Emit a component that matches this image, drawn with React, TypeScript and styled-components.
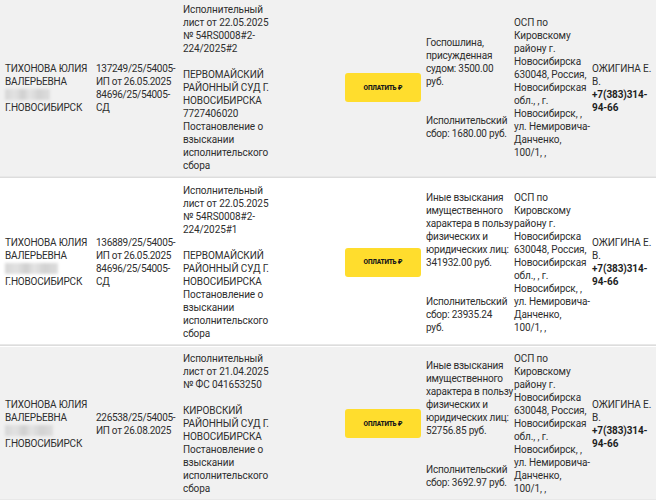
import React from "react";
import styled, { createGlobalStyle } from "styled-components";

const Global = createGlobalStyle`
  html, body { margin: 0; padding: 0; background: #ffffff; }
  body { font-family: Roboto, "Liberation Sans", sans-serif; overflow: hidden; }
`;

const Table = styled.div`
  margin-top: -2px;
  width: 656px;
  color: #2e2e2e;
  font-size: 10px;
  line-height: 13px;
`;

const Row = styled.div<{ $shade: boolean }>`
  display: grid;
  grid-template-columns: 91px 87px 92px 151px 88px 78px 69px;
  align-items: center;
  padding: 5px 0;
  background: ${(p) => (p.$shade ? "#f1f1f1" : "#ffffff")};
  border-bottom: 1px solid #dddddd;
  box-shadow: inset 0 -1px 0 #e8e8e8;
  margin-bottom: 1px;
`;

const Cell = styled.div<{ $spacing?: number }>`
  padding-left: 5px;
  white-space: nowrap;
  letter-spacing: ${(p) => p.$spacing ?? -0.1}px;
`;

const Block = styled.div<{ $gap?: number }>`
  margin-top: ${(p) => p.$gap ?? 0}px;
`;

const Line = styled.div<{ $bold?: boolean }>`
  font-weight: ${(p) => (p.$bold ? 700 : 400)};
  color: ${(p) => (p.$bold ? "#1e1e1e" : "inherit")};
`;

const Masked = styled.div<{ $w: number }>`
  height: 13px;
  display: flex;
  align-items: center;
  &::before {
    content: "";
    display: block;
    width: ${(p) => p.$w}px;
    height: 11px;
    background: linear-gradient(90deg, #d6d6d6 0%, #e2e2e2 22%, #cfcfcf 40%, #e4e4e4 55%, #d2d2d2 75%, #dddddd 100%);
    filter: blur(1.5px);
  }
`;

const PayCell = styled.div`
  display: flex;
  justify-content: flex-end;
`;

const PayButton = styled.button`
  width: 76px;
  height: 29px;
  border: none;
  border-radius: 3px;
  background: #ffdd2d;
  color: #1a1a1a;
  font-family: Roboto, "Liberation Sans", sans-serif;
  font-size: 6.5px;
  font-weight: 900;
  letter-spacing: -0.2px;
  padding: 0;
  cursor: pointer;
`;

const Lines = ({ items, bold }: { items: string[]; bold?: boolean }) => (
  <>
    {items.map((t, i) => (
      <Line key={i} $bold={bold}>
        {t}
      </Line>
    ))}
  </>
);

type Rec = {
  mask: number;
  ip: string[];
  docTop: string[];
  docBottom: string[];
  sumTop: string[];
  sumBottom: string[];
};

const osp = [
  "ОСП по",
  "Кировскому",
  "району г.",
  "Новосибирска",
  "630048, Россия,",
  "Новосибирская",
  "обл., , г.",
  "Новосибирск, ,",
  "ул. Немировича-",
  "Данченко,",
  "100/1, ,",
];

const rows: Rec[] = [
  {
    mask: 45,
    ip: ["137249/25/54005-", "ИП от 26.05.2025", "84696/25/54005-", "СД"],
    docTop: ["Исполнительный", "лист от 22.05.2025", "№ 54RS0008#2-", "224/2025#2"],
    docBottom: [
      "ПЕРВОМАЙСКИЙ",
      "РАЙОННЫЙ СУД Г.",
      "НОВОСИБИРСКА",
      "7727406020",
      "Постановление о",
      "взыскании",
      "исполнительского",
      "сбора",
    ],
    sumTop: ["Госпошлина,", "присужденная", "судом: 3500.00", "руб."],
    sumBottom: ["Исполнительский", "сбор: 1680.00 руб."],
  },
  {
    mask: 53,
    ip: ["136889/25/54005-", "ИП от 26.05.2025", "84696/25/54005-", "СД"],
    docTop: ["Исполнительный", "лист от 22.05.2025", "№ 54RS0008#2-", "224/2025#1"],
    docBottom: [
      "ПЕРВОМАЙСКИЙ",
      "РАЙОННЫЙ СУД Г.",
      "НОВОСИБИРСКА",
      "Постановление о",
      "взыскании",
      "исполнительского",
      "сбора",
    ],
    sumTop: [
      "Иные взыскания",
      "имущественного",
      "характера в пользу",
      "физических и",
      "юридических лиц:",
      "341932.00 руб.",
    ],
    sumBottom: ["Исполнительский", "сбор: 23935.24", "руб."],
  },
  {
    mask: 48,
    ip: ["226538/25/54005-", "ИП от 26.08.2025"],
    docTop: ["Исполнительный", "лист от 21.04.2025", "№ ФС 041653250"],
    docBottom: [
      "КИРОВСКИЙ",
      "РАЙОННЫЙ СУД Г.",
      "НОВОСИБИРСКА",
      "Постановление о",
      "взыскании",
      "исполнительского",
      "сбора",
    ],
    sumTop: [
      "Иные взыскания",
      "имущественного",
      "характера в пользу",
      "физических и",
      "юридических лиц:",
      "52756.85 руб.",
    ],
    sumBottom: ["Исполнительский", "сбор: 3692.97 руб."],
  },
];

export default function App() {
  return (
    <>
      <Global />
      <Table>
        {rows.map((r, i) => (
          <Row key={i} $shade={i % 2 === 0}>
            <Cell $spacing={-0.2}>
              <Line>ТИХОНОВА ЮЛИЯ</Line>
              <Line>ВАЛЕРЬЕВНА</Line>
              <Masked $w={r.mask} />
              <Line>Г.НОВОСИБИРСК</Line>
            </Cell>
            <Cell $spacing={-0.3}>
              <Lines items={r.ip} />
            </Cell>
            <Cell>
              <Lines items={r.docTop} />
              <Block $gap={13}>
                <Lines items={r.docBottom} />
              </Block>
            </Cell>
            <PayCell>
              <PayButton>ОПЛАТИТЬ ₽</PayButton>
            </PayCell>
            <Cell $spacing={-0.2}>
              <Lines items={r.sumTop} />
              <Block $gap={26}>
                <Lines items={r.sumBottom} />
              </Block>
            </Cell>
            <Cell>
              <Lines items={osp} />
            </Cell>
            <Cell>
              <Line>ОЖИГИНА Е.</Line>
              <Line>В.</Line>
              <Lines bold items={["+7(383)314-", "94-66"]} />
            </Cell>
          </Row>
        ))}
      </Table>
    </>
  );
}
